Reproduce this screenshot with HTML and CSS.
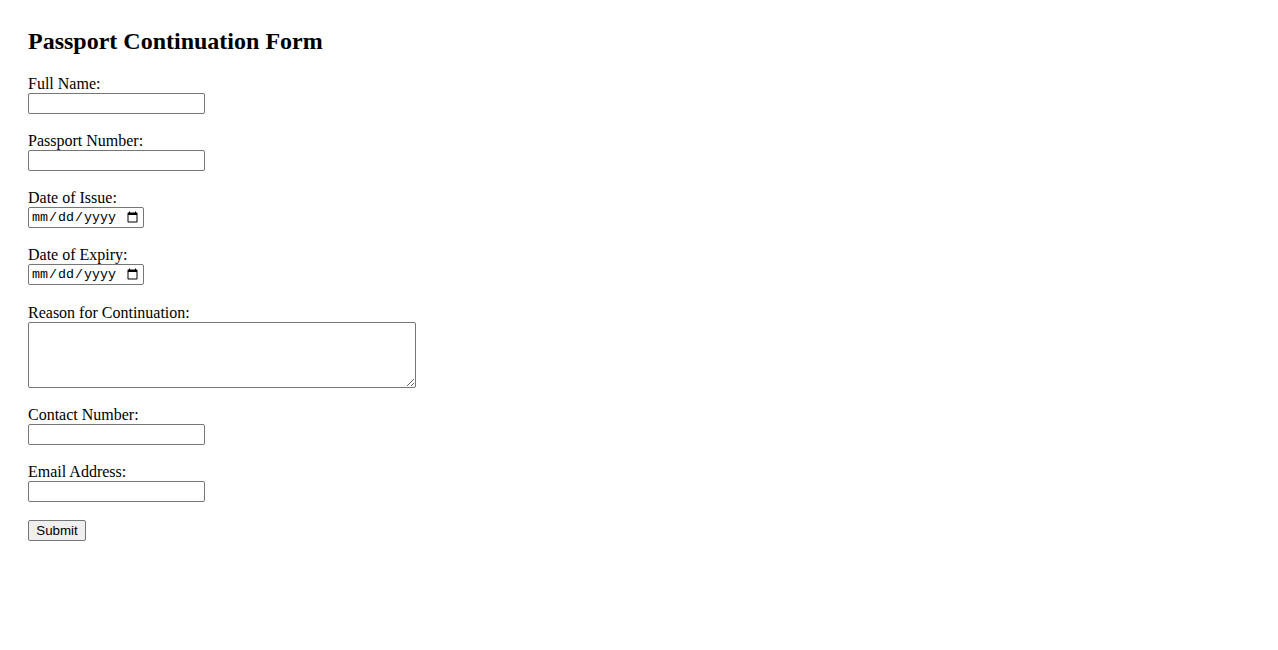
FILE: index.html
```html
<!DOCTYPE html>
<html lang="en">
<head>
<meta charset="utf-8">
<title>Passport Continuation Form</title>
<link rel="stylesheet" href="styles.css">
</head>
<body>
<div class="page">
  <h2 class="title">Passport Continuation Form</h2>
  <form class="form">
    <label for="name">Full Name:</label><br>
    <input type="text" id="name" class="field"><br><br>
    <label for="passport">Passport Number:</label><br>
    <input type="text" id="passport" class="field"><br><br>
    <label for="issue">Date of Issue:</label><br>
    <input type="date" id="issue" class="date"><br><br>
    <label for="expiry">Date of Expiry:</label><br>
    <input type="date" id="expiry" class="date"><br><br>
    <label for="reason">Reason for Continuation:</label><br>
    <textarea id="reason" class="area"></textarea><br><br>
    <label for="contact">Contact Number:</label><br>
    <input type="tel" id="contact" class="field"><br><br>
    <label for="email">Email Address:</label><br>
    <input type="email" id="email" class="field"><br><br>
    <input type="submit" value="Submit" class="submit">
  </form>
</div>
</body>
</html>
```

FILE: styles.css
```css
html, body {
  margin: 0;
  padding: 0;
  background: #fff;
}
body {
  font-family: "Liberation Serif", "Times New Roman", serif;
  font-size: 16px;
  color: #000;
}
.page {
  padding: 28px;
}
.title {
  margin: 0 0 20px 0;
  font-size: 24px;
  font-weight: bold;
}
.field, .date, .area, .submit {
  font-family: "Liberation Sans", Arial, sans-serif;
  font-size: 13.333px;
}
.field {
  width: 177px;
  height: 21px;
  box-sizing: border-box;
  border: 1px solid #767676;
  border-radius: 2px;
  padding: 1px 2px;
}
.date {
  width: 116px;
  height: 21px;
  margin-bottom: 0.4px;
  box-sizing: border-box;
  font-family: "Liberation Mono", "DejaVu Sans Mono", monospace;
  border: 1px solid #767676;
  border-radius: 2px;
  padding: 1px 2px;
}
.area {
  width: 388px;
  height: 66px;
  box-sizing: border-box;
  border: 1px solid #767676;
  border-radius: 2px;
  vertical-align: bottom;
}
.submit {
  width: 58px;
  height: 21px;
  box-sizing: border-box;
  padding: 1px 6px;
  border: 1px solid #767676;
  border-radius: 2px;
  background: #efefef;
}
```
